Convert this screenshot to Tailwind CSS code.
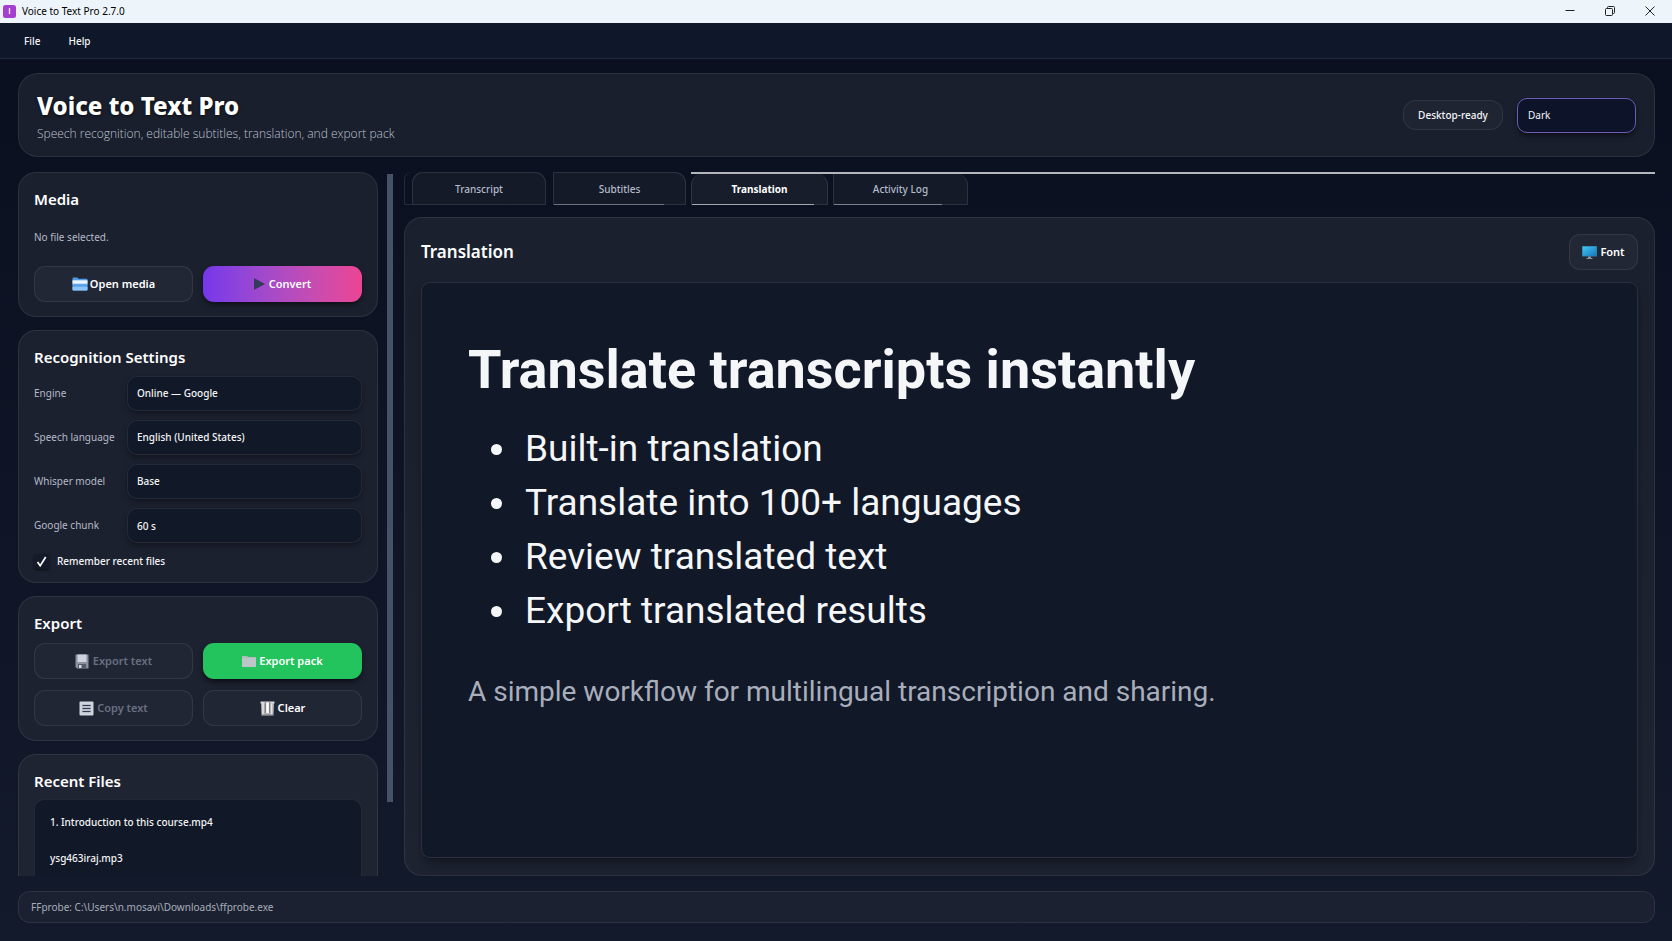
<!DOCTYPE html>
<html lang="en">
<head>
<meta charset="utf-8">
<title>Voice to Text Pro 2.7.0</title>
<script src="https://cdn.jsdelivr.net/npm/@tailwindcss/browser@4"></script>
</head>
<body class="flex h-screen flex-col overflow-hidden bg-linear-to-b from-[#090f1f] to-[#131a2b] font-['Noto_Sans','Open_Sans',sans-serif] text-[10px] text-gray-100">

<header class="flex h-[23px] shrink-0 items-center bg-[#edf4fa] pr-[2px] pl-[3px] text-black">
  <svg class="size-[13px]" viewBox="0 0 13 13" aria-hidden="true"><rect width="13" height="13" rx="2.5" fill="#a63fd0"/><path d="M6.5 3v6" stroke="#fff" stroke-width="1.3"/></svg>
  <span class="ml-[6px] flex-1">Voice to Text Pro 2.7.0</span>
  <button class="flex h-[22px] w-10 items-center justify-center self-start" aria-label="Minimize"><svg class="size-[10px]" viewBox="0 0 10 10"><path d="M.5 4.500h9" stroke="#222" fill="none"/></svg></button>
  <button class="flex h-[22px] w-10 items-center justify-center self-start" aria-label="Restore"><svg class="size-[10px]" viewBox="0 0 10 10" fill="none" stroke="#222"><rect x=".5" y="2.5" width="7" height="7" rx="1"/><path d="M2.500 2.300V1.500a1 1 0 0 1 1-1h5a1 1 0 0 1 1 1v5a1 1 0 0 1-1 1h-.8"/></svg></button>
  <button class="flex h-[22px] w-10 items-center justify-center self-start" aria-label="Close"><svg class="size-[10px]" viewBox="0 0 10 10"><path d="M.5.5l9 9M9.500.5l-9 9" stroke="#222" fill="none"/></svg></button>
</header>

<nav class="flex h-9 shrink-0 items-center gap-7 border-b border-[#222838] bg-[#0f172a] px-6 pt-px font-medium">
  <button>File</button>
  <button>Help</button>
</nav>

<div class="flex min-h-0 flex-1 flex-col gap-[15px] pt-[14px] pr-[17px] pb-[18px] pl-[18px]">
  <section class="flex h-[84px] shrink-0 items-center rounded-[20px] border border-white/8 bg-[#1a1f2d] px-[18px]">
    <div class="flex-1 pt-[5px]">
      <h1 class="text-[24px] leading-[32px] font-extrabold text-white [text-shadow:0_1px_3px_#000a]">Voice to Text Pro</h1>
      <p class="font-['Open_Sans',sans-serif] text-[12px] leading-[24px] font-light text-[#bcc2d0]">Speech recognition, editable subtitles, translation, and export pack</p>
    </div>
    <span class="flex h-[30px] w-[100px] items-center justify-center rounded-[13px] border border-white/8 bg-[#1f2433] font-medium">Desktop-ready</span>
    <select aria-label="Theme" class="ml-[14px] h-[35px] w-[119px] appearance-none rounded-[10px] border border-[#6d5bb5] bg-[#0d142a] px-[10px] text-gray-100 shadow-md shadow-black/40"><option>Dark</option><option>Light</option></select>
  </section>

  <div class="flex min-h-0 flex-1">
    <aside class="flex w-[360px] shrink-0 flex-col gap-[13px] overflow-hidden">
      <section class="shrink-0 rounded-[18px] border border-white/8 bg-[#1b202e] px-[15px] pt-[14px] pb-[14px]">
        <h2 class="text-[15px] leading-[24px] font-semibold text-white">Media</h2>
        <p class="mt-[18px] leading-[16px] text-[#b4bac8]">No file selected.</p>
        <div class="mt-[21px] grid grid-cols-2 gap-[10px] text-[11px] font-semibold text-white">
          <button class="flex h-9 items-center justify-center gap-[2px] rounded-[11px] border border-white/8 bg-[#222735]">
            <svg class="h-[14px] w-4" viewBox="0 0 16 14" aria-hidden="true"><path d="M.5 1.500A1 1 0 0 1 1.500.5h3.800l1 1.200h8.200a1 1 0 0 1 1 1V6H.5z" fill="#4f9be8"/><path d="M.5 3.300h15V8H.5z" fill="#edf6ff"/><path d="M.5 6.800h15v5.700a1 1 0 0 1-1 1h-13a1 1 0 0 1-1-1z" fill="#5ba3ec"/><path d="M.5 9.800h15v2.700a1 1 0 0 1-1 1h-13a1 1 0 0 1-1-1z" fill="#8cc4f7"/></svg>Open media</button>
          <button class="flex h-9 items-center justify-center gap-1 rounded-[11px] bg-linear-to-r from-[#7636eb] to-[#ec4494] shadow-md shadow-black/40">
            <svg class="h-3 w-[11px]" viewBox="0 0 11 12" aria-hidden="true"><path d="M0 0l11 6-11 6z" fill="#343a5c"/></svg>Convert</button>
        </div>
      </section>

      <section class="shrink-0 rounded-[18px] border border-white/8 bg-[#1c212f] px-[15px] pt-[14px] pb-[13px]">
        <h2 class="text-[15px] leading-[24px] font-semibold text-white">Recognition Settings</h2>
        <div class="mt-[7px] grid grid-cols-[93px_1fr] items-center gap-y-[9px] text-[#b4bac8]">
          <label for="engine">Engine</label>
          <select id="engine" class="h-[35px] w-full appearance-none rounded-[10px] border border-white/8 bg-[#111928] px-[9px] font-medium text-gray-100 shadow-md shadow-black/25"><option>Online — Google</option></select>
          <label for="lang">Speech language</label>
          <select id="lang" class="h-[35px] w-full appearance-none rounded-[10px] border border-white/8 bg-[#111928] px-[9px] font-medium text-gray-100 shadow-md shadow-black/25"><option>English (United States)</option></select>
          <label for="model">Whisper model</label>
          <select id="model" class="h-[35px] w-full appearance-none rounded-[10px] border border-white/8 bg-[#111928] px-[9px] font-medium text-gray-100 shadow-md shadow-black/25"><option>Base</option></select>
          <label for="chunk">Google chunk</label>
          <input id="chunk" type="text" value="60 s" class="h-[35px] w-full rounded-[10px] border border-white/8 bg-[#111928] px-[9px] font-medium text-gray-100 shadow-md shadow-black/25">
        </div>
        <label class="mt-[10px] flex h-4 items-center gap-2 font-medium">
          <span class="grid size-[15px] place-items-center">
            <input type="checkbox" checked class="peer col-start-1 row-start-1 size-[15px] appearance-none rounded-[3px] bg-[#151a29] shadow-sm shadow-black/50">
            <svg class="pointer-events-none invisible col-start-1 row-start-1 size-[11px] peer-checked:visible" viewBox="0 0 11 11" aria-hidden="true"><path d="M1.500 6l2.700 3.700L9.700 1" fill="none" stroke="#fff" stroke-width="1.700"/></svg>
          </span>Remember recent files</label>
      </section>

      <section class="shrink-0 rounded-[18px] border border-white/8 bg-[#1d2231] px-[15px] pt-[14px] pb-[14px]">
        <h2 class="text-[15px] leading-[24px] font-semibold text-white">Export</h2>
        <div class="mt-[8px] grid grid-cols-2 gap-x-[10px] gap-y-[11px] text-[11px] font-semibold text-white">
          <button disabled class="flex h-9 items-center justify-center gap-1 rounded-[11px] border border-white/8 bg-[#212635] text-[#697080]">
            <svg class="h-[15px] w-[14px]" viewBox="0 0 14 15" aria-hidden="true"><path d="M.5.5h13v14H2L.5 13z" fill="#8d92a0"/><path d="M2.500.5h9V8h-9z" fill="#ced3de"/><path d="M3 10h8v4.500H3z" fill="#555b6c"/><path d="M4 11h2.500v3H4z" fill="#d5d9e2"/></svg>Export text</button>
          <button class="flex h-9 items-center justify-center gap-[3px] rounded-[11px] bg-[#23c35e] shadow-md shadow-black/50">
            <svg class="h-3 w-[14px]" viewBox="0 0 14 12" aria-hidden="true"><path d="M0 1h5l1 1h8v10H0z" fill="#afbcbc"/><path d="M0 3h14v9H0z" fill="#bcc5c7"/></svg>Export pack</button>
          <button disabled class="flex h-9 items-center justify-center gap-[3px] rounded-[11px] border border-white/8 bg-[#212635] text-[#697080]">
            <svg class="size-[15px]" viewBox="0 0 15 15" aria-hidden="true"><rect x=".5" y=".5" width="14" height="14" rx="1" fill="#cfd4df"/><rect x="3" y="3" width="9" height="9" fill="#b9bfcc"/><path d="M3.500 4.500h8M3.500 7.500h8M3.500 10.500h8" stroke="#333a4b"/></svg>Copy text</button>
          <button class="flex h-9 items-center justify-center gap-[3px] rounded-[11px] border border-white/8 bg-[#212635]">
            <svg class="size-[15px]" viewBox="0 0 15 15" aria-hidden="true"><path d="M1 1h13l-.5 13.500h-12z" fill="#b5b5b8"/><path d="M.5.5h14v2H.5z" fill="#d8d8da"/><path d="M3 2v12M11.500 3v11" stroke="#e4e4e6" stroke-width="1.500"/><path d="M7.500 2v10" stroke="#fff" stroke-width="2.500"/><path d="M5.300 1v11M9.700 1v11" stroke="#77777b"/><path d="M1.700 14h11.600" stroke="#77777b"/></svg>Clear</button>
        </div>
      </section>

      <section class="shrink-0 rounded-[18px] border border-white/8 bg-[#1f2432] px-[15px] pt-[14px] pb-[14px]">
        <h2 class="text-[15px] leading-[24px] font-semibold text-white">Recent Files</h2>
        <ul class="mt-[6px] h-[150px] rounded-[10px] border border-white/8 bg-[#111827] px-[15px] pt-1 font-medium">
          <li class="flex h-9 items-center">1. Introduction to this course.mp4</li>
          <li class="flex h-9 items-center">ysg463iraj.mp3</li>
        </ul>
      </section>
    </aside>

    <div class="mr-[11px] ml-[9px] flex w-[6px] shrink-0 flex-col pt-[2px] pb-[74px]"><div class="flex-1 bg-[#455166]"></div></div>

    <main class="flex min-w-0 flex-1 flex-col">
      <div role="tablist" class="flex h-[33px] shrink-0 items-stretch text-[#b3bac8]">
        <span class="w-[8px] rounded-tl-[8px] border-b border-l border-white/10"></span>
        <button role="tab" class="w-[134px] rounded-t-[11px] border border-white/10 bg-[#151a29] pt-px font-medium">Transcript</button>
        <button role="tab" class="relative ml-[7px] w-[133px] rounded-tr-[11px] border border-white/10 bg-[#151a29] pt-px font-medium">Subtitles<span class="absolute -bottom-px left-0 h-px w-[110px] bg-[#6c717d]"></span></button>
        <div class="ml-[5px] flex flex-1 border-t-2 border-[#b4b6bb]">
          <button role="tab" aria-selected="true" class="relative w-[137px] rounded-t-[11px] border border-t-0 border-white/10 bg-[#181d2b] font-bold text-white">Translation<span class="absolute -bottom-px left-0 h-px w-[122px] bg-[#a5a8b0]"></span></button>
          <button role="tab" class="relative ml-[5px] w-[135px] rounded-tr-[11px] border border-t-0 border-white/10 bg-[#151a29] font-medium">Activity Log<span class="absolute -bottom-px left-0 h-px w-[108px] bg-[#7c818c]"></span></button>
        </div>
      </div>

      <section class="mt-3 flex min-h-0 flex-1 flex-col rounded-[18px] border border-white/8 bg-linear-to-b from-[#1b202e] to-[#1f2433] p-4 pb-[17px]">
        <div class="flex h-9 items-center justify-between">
          <h2 class="text-[17px] leading-[24px] font-semibold text-white">Translation</h2>
          <button class="flex h-9 w-[69px] items-center justify-center gap-[3px] rounded-[11px] border border-white/8 bg-[#222735] text-[11px] font-semibold text-white">
            <svg class="h-[13px] w-[15px]" viewBox="0 0 15 13" aria-hidden="true"><defs><linearGradient id="scr" x1="0" y1="0" x2="1" y2="1"><stop offset="0" stop-color="#45c6f2"/><stop offset="1" stop-color="#1479bd"/></linearGradient></defs><rect width="15" height="10.500" rx=".6" fill="#2a7fae"/><rect x=".7" y=".7" width="13.600" height="9" fill="url(#scr)"/><path d="M6 10.500h3v1.500h1.500v1h-6v-1H6z" fill="#8a919c"/></svg>Font</button>
        </div>
        <article class="mt-3 min-h-0 flex-1 overflow-hidden rounded-[9px] border border-white/10 bg-[#111828] px-[46px] pt-[55px] font-[Roboto,Inter,sans-serif] text-[#f5f6f8] shadow-lg shadow-black/30">
          <h3 class="text-[54px] leading-[64px] font-bold">Translate transcripts instantly</h3>
          <ul class="mt-5 text-[37px] leading-[54px]">
            <li class="flex items-center gap-[23px] pl-[23px]"><span class="size-[11px] rounded-full bg-current"></span>Built-in translation</li>
            <li class="flex items-center gap-[23px] pl-[23px]"><span class="size-[11px] rounded-full bg-current"></span>Translate into 100+ languages</li>
            <li class="flex items-center gap-[23px] pl-[23px]"><span class="size-[11px] rounded-full bg-current"></span>Review translated text</li>
            <li class="flex items-center gap-[23px] pl-[23px]"><span class="size-[11px] rounded-full bg-current"></span>Export translated results</li>
          </ul>
          <p class="mt-[34px] text-[28px] leading-[40px] text-[#a9aebb]">A simple workflow for multilingual transcription and sharing.</p>
        </article>
      </section>
    </main>
  </div>

  <footer class="flex h-8 shrink-0 items-center rounded-[12px] border border-white/8 bg-[#1b2130] px-3 pt-px text-[#a7adba]">FFprobe: C:\Users\n.mosavi\Downloads\ffprobe.exe</footer>
</div>
</body>
</html>
